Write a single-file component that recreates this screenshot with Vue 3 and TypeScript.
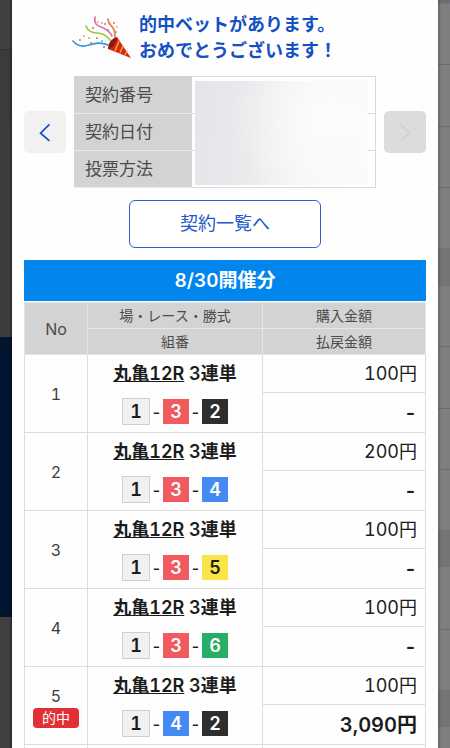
<script setup lang="ts">
interface Bet {
  no: number
  race: string
  kind: string
  picks: number[]
  stake: string
  payout: string
  hit: boolean
}

const contractFields: string[] = ['契約番号', '契約日付', '投票方法']

const makeBet = (no: number, picks: number[], stake: string, payout = '-'): Bet => ({
  no,
  race: '丸亀12R',
  kind: '3連単',
  picks,
  stake,
  payout,
  hit: payout !== '-',
})

const bets: Bet[] = [
  makeBet(1, [1, 3, 2], '100円'),
  makeBet(2, [1, 3, 4], '200円'),
  makeBet(3, [1, 3, 5], '100円'),
  makeBet(4, [1, 3, 6], '100円'),
  makeBet(5, [1, 4, 2], '100円', '3,090円'),
]
</script>

<template>
  <div class="screen">
    <div class="backdrop backdrop-left"></div>
    <main class="dialog">
      <header class="congrats">
        <svg class="cracker" viewBox="0 0 62 46" aria-hidden="true">
          <g fill="none" stroke-linecap="round" stroke-width="1.7">
            <path d="M2 26c5 6 10 6 16 4s12-3 19 0" stroke="#2b9be0" />
            <path d="M15 11c2 5 5 7 11 7s11 4 14 8" stroke="#98c93c" />
            <path d="M24 2c-1 6 2 9 6 10s9 5 11 9" stroke="#e36db0" />
            <path d="M37 4c0 5 3 6 5 9s2 6 2 9" stroke="#ee7d3d" />
          </g>
          <g>
            <circle cx="9" cy="25" r="0.9" fill="#ef5350" />
            <circle cx="13" cy="21" r="0.9" fill="#f29a38" />
            <circle cx="18" cy="23" r="0.9" fill="#8bc34a" />
            <circle cx="20" cy="28" r="0.9" fill="#ef5350" />
            <circle cx="26" cy="23" r="0.9" fill="#ee6b35" />
            <circle cx="31" cy="26" r="0.9" fill="#4aa7df" />
            <circle cx="22" cy="13" r="0.9" fill="#ef5350" />
            <circle cx="27" cy="7" r="0.9" fill="#f0b33f" />
            <circle cx="31" cy="8" r="0.9" fill="#8bc34a" />
            <circle cx="34" cy="9" r="0.9" fill="#ef5350" />
            <circle cx="37" cy="15" r="0.9" fill="#4aa7df" />
            <circle cx="43" cy="8" r="0.9" fill="#ef5350" />
            <circle cx="46" cy="12" r="0.9" fill="#f0b33f" />
            <circle cx="45" cy="17" r="0.9" fill="#4aa7df" />
            <circle cx="33" cy="32" r="0.9" fill="#d64292" />
          </g>
          <path d="M46 22l-9 12 23 9z" fill="#d6261c" />
          <path d="M46 22c-5 1-9 6-9 12 5 0 9-7 9-12z" fill="#8e1712" />
          <path d="M48 26l-4 10M52 31l-3 7M56 36l-2 4" stroke="#f6a623" stroke-width="1.5" fill="none" />
        </svg>
        <p class="congrats-text">的中ベットがあります。<br />おめでとうございます！</p>
      </header>

      <section class="contract">
        <button class="nav" type="button" aria-label="前へ">
          <svg viewBox="0 0 16 20" aria-hidden="true"><path d="M12 3L4 11l8 7" /></svg>
        </button>
        <div class="contract-box">
          <table class="contract-table">
            <tbody>
              <tr v-for="field in contractFields" :key="field">
                <th scope="row">{{ field }}</th>
                <td></td>
              </tr>
            </tbody>
          </table>
          <div class="masked"></div>
        </div>
        <button class="nav nav-off" type="button" aria-label="次へ" disabled>
          <svg viewBox="0 0 16 20" aria-hidden="true"><path d="M4 3l8 8-8 7" /></svg>
        </button>
      </section>

      <button class="list-button" type="button">契約一覧へ</button>

      <section class="result">
        <h2 class="result-title">8/30開催分</h2>
        <table class="bets">
          <colgroup>
            <col class="col-no" />
            <col />
            <col class="col-money" />
          </colgroup>
          <thead>
            <tr>
              <th rowspan="2">No</th>
              <th>場・レース・勝式</th>
              <th>購入金額</th>
            </tr>
            <tr>
              <th>組番</th>
              <th>払戻金額</th>
            </tr>
          </thead>
          <tbody v-for="bet in bets" :key="bet.no">
            <tr>
              <td class="no" rowspan="2">
                {{ bet.no }}
                <span v-if="bet.hit" class="hit">的中</span>
              </td>
              <td class="race" rowspan="2">
                <div class="race-name"><a href="#">{{ bet.race }}</a> {{ bet.kind }}</div>
                <div class="picks">
                  <template v-for="(boat, i) in bet.picks" :key="i">
                    <span v-if="i > 0" class="dash">-</span>
                    <span class="boat" :class="`boat-${boat}`">{{ boat }}</span>
                  </template>
                </div>
              </td>
              <td class="money">{{ bet.stake }}</td>
            </tr>
            <tr>
              <td class="money payout">{{ bet.payout }}</td>
            </tr>
          </tbody>
          <tfoot>
            <tr>
              <td></td>
              <td></td>
              <td></td>
            </tr>
          </tfoot>
        </table>
      </section>
    </main>
    <div class="backdrop backdrop-right"></div>
  </div>
</template>

<style>
body {
  margin: 0;
}
</style>

<style scoped>
.screen {
  display: grid;
  grid-template-columns: 12px 1fr 12px;
  height: 100vh;
  overflow: hidden;
  font-family: Inter, 'Noto Sans CJK JP', sans-serif;
  font-variant-numeric: tabular-nums;
  color: #1c1c1c;
}

.backdrop-left {
  background:
    linear-gradient(to right, transparent 9px, rgba(0, 0, 0, 0.35)),
    linear-gradient(#414141 49px, #333 49px, #3b3b3b 51px, #3d3d3d 337px, #02142f 337px, #02142f 617px, #404040 617px);
}

.backdrop-right {
  background:
    linear-gradient(to right, rgba(0, 0, 0, 0.2), transparent 3px),
    linear-gradient(
      #6d6d78 3px, #7e7e7e 4px,
      #7e7e7e 64px, #6c6c6c 64px, #6c6c6c 65px, #7e7e7e 65px,
      #7e7e7e 126px, #6c6c6c 126px, #6c6c6c 127px, #7e7e7e 127px,
      #7e7e7e 187px, #6c6c6c 187px, #6c6c6c 188px, #7e7e7e 188px,
      #7e7e7e 248px, #747474 248px, #747474 286px, #7e7e7e 286px,
      #7e7e7e 346px, #6c6c6c 346px, #6c6c6c 347px, #7e7e7e 347px,
      #7e7e7e 408px, #6c6c6c 408px, #6c6c6c 409px, #7e7e7e 409px,
      #7e7e7e 469px, #6c6c6c 469px, #6c6c6c 470px, #7e7e7e 470px,
      #7e7e7e 530px, #747474 530px, #747474 567px, #7e7e7e 567px,
      #7e7e7e 629px, #6c6c6c 629px, #6c6c6c 630px, #7e7e7e 630px,
      #7e7e7e 690px, #747474 690px, #747474 727px, #7e7e7e 727px
    );
}

.dialog {
  display: flex;
  flex-direction: column;
  min-width: 0;
  padding: 12px 12px 0;
  background: #fefefe;
}

.congrats {
  display: flex;
  justify-content: center;
  gap: 6px;
  padding-right: 42px;
  height: 52px;
}

.cracker {
  width: 62px;
  height: 46px;
  margin-top: 3px;
}

.congrats-text {
  margin: 0;
  font-size: 18px;
  line-height: 26px;
  font-weight: 600;
  color: #1450c4;
}

.contract {
  display: flex;
  align-items: center;
  gap: 8px;
  margin-top: 12px;
}

.nav {
  display: flex;
  flex: none;
  align-items: center;
  justify-content: center;
  width: 42px;
  height: 42px;
  padding: 0;
  border: 0;
  border-radius: 5px;
  background: #f1f1f1;
  color: #1450c4;
}

.nav svg {
  width: 18px;
  height: 22px;
  fill: none;
  stroke: currentColor;
  stroke-width: 1.6;
}

.nav-off {
  background: #dcdcdc;
  color: #d0d0d0;
}

.contract-box {
  position: relative;
  flex: 1;
}

.contract-table {
  width: 100%;
  border-collapse: collapse;
}

.contract-table th {
  box-sizing: border-box;
  width: 117px;
  height: 37px;
  padding: 0 0 0 10px;
  border: 1px solid #d3d3d3;
  border-bottom-color: #e9e9e9;
  background: #d3d3d3;
  font-size: 17px;
  line-height: 24px;
  font-weight: 400;
  text-align: left;
  color: #4b4b4b;
}

.contract-table td {
  border: 1px solid #dadada;
}

.masked {
  position: absolute;
  inset: 5px 8px 3px 121px;
  background:
    radial-gradient(circle at 75% 35%, #fcfcfd, rgba(252, 252, 253, 0) 65%),
    linear-gradient(100deg, #e4e5e9, #e9eaec 35%, #f6f6f8 65%, #fbfbfc);
}

.list-button {
  align-self: center;
  width: 192px;
  height: 48px;
  margin-top: 12px;
  padding: 0;
  border: 1px solid #2a62cc;
  border-radius: 6px;
  background: #fff;
  font-family: inherit;
  font-size: 18px;
  line-height: 24px;
  color: #2358c8;
}

.result {
  margin-top: 12px;
}

.result-title {
  margin: 0 0 1px;
  font-size: 19px;
  line-height: 41px;
  font-weight: 600;
  text-align: center;
  color: #fff;
  background: #0086ec;
}

.bets {
  width: 100%;
  table-layout: fixed;
  border-collapse: collapse;
}

.col-no {
  width: 63px;
}

.col-money {
  width: 163px;
}

.bets th,
.bets td {
  box-sizing: border-box;
  padding: 0;
  border: 1px solid #dcdcdc;
}

.bets th {
  height: 26px;
  border-color: #e6e6e6;
  background: #d3d3d3;
  font-size: 14px;
  line-height: 20px;
  font-weight: 400;
  color: #4b4b4b;
}

.bets th[rowspan] {
  font-size: 16px;
}

.bets .no {
  font-size: 16px;
  line-height: 24px;
  text-align: center;
  color: #3c3c3c;
}

.hit {
  display: block;
  width: 46px;
  margin: 0 auto;
  border-radius: 4px;
  background: #e22f36;
  font-size: 14px;
  line-height: 20px;
  color: #fff;
}

.race-name {
  font-size: 18px;
  line-height: 24px;
  font-weight: 600;
  text-align: center;
}

.race-name a {
  color: inherit;
  text-decoration: underline;
}

.picks {
  display: flex;
  align-items: center;
  justify-content: center;
  margin-top: 12px;
  height: 27px;
}

.dash {
  width: 13px;
  font-size: 16px;
  line-height: 24px;
  font-weight: 500;
  text-align: center;
}

.boat {
  width: 26px;
  font-size: 18px;
  line-height: 25px;
  font-weight: 600;
  text-align: center;
  color: #fff;
}

.boat-1 {
  border: 1px solid #cfcfcf;
  background: #f1f1f1;
  color: #1c1c1c;
}

.boat-2 {
  background: #2e2e30;
}

.boat-3 {
  background: #f15a5e;
}

.boat-4 {
  background: #448af5;
}

.boat-5 {
  background: #f9e548;
  color: #1c1c1c;
}

.boat-6 {
  background: #27ae66;
}

.bets .money {
  height: 38px;
  padding-right: 8px;
  font-size: 18px;
  line-height: 24px;
  text-align: right;
}

.bets .payout {
  height: 40px;
  font-size: 20px;
  font-weight: 600;
}

.bets tfoot td {
  height: 40px;
}
</style>
